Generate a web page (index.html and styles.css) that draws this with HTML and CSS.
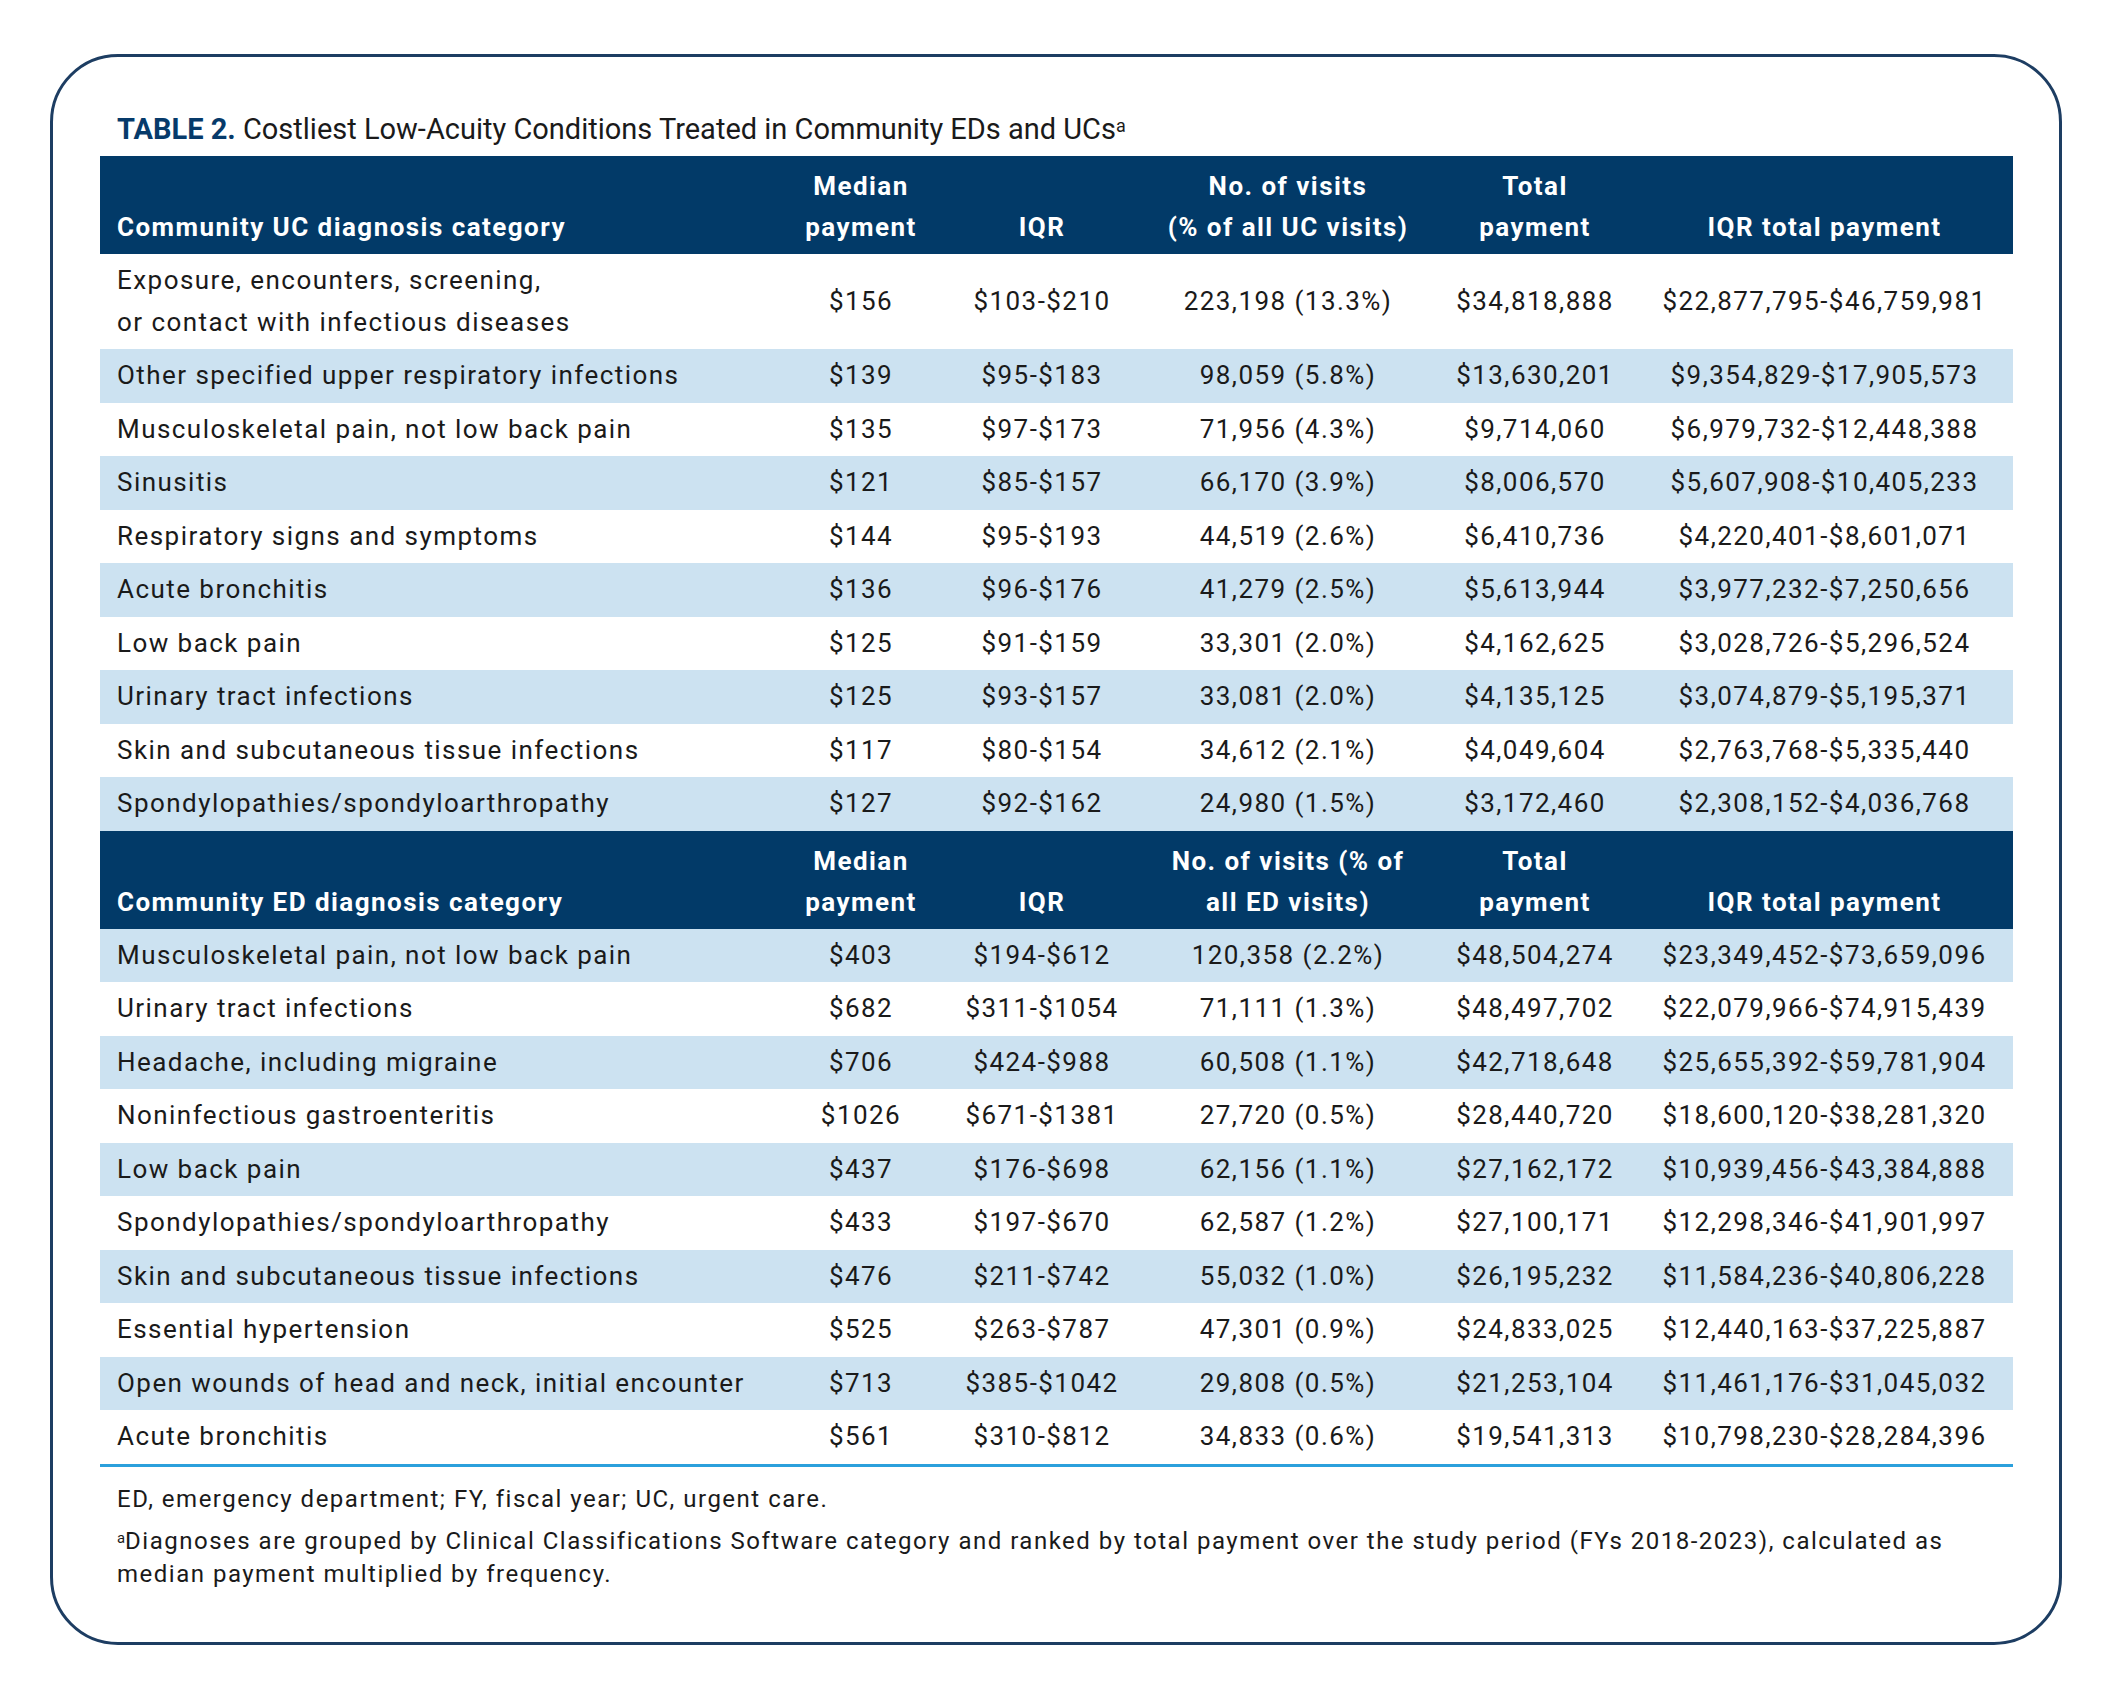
FILE: index.html
```html
<!DOCTYPE html>
<html lang="en">
<head>
<meta charset="utf-8">
<title>Table 2</title>
<link rel="stylesheet" href="styles.css">
</head>
<body>
<div class="frame">
  <div class="caption"><span class="label">TABLE 2.</span> Costliest Low-Acuity Conditions Treated in Community EDs and UCs<sup class="sup">a</sup></div>
  <table class="data">
    <colgroup>
      <col class="c1"><col class="c2"><col class="c3"><col class="c4"><col class="c5"><col class="c6">
    </colgroup>
    <tbody class="uc">
      <tr class="head">
        <th class="first">Community UC diagnosis category</th>
        <th>Median<br>payment</th>
        <th>IQR</th>
        <th>No. of visits<br>(% of all UC visits)</th>
        <th>Total<br>payment</th>
        <th>IQR total payment</th>
      </tr>
      <tr><td class="first">Exposure, encounters, screening,<br>or contact with infectious diseases</td><td>$156</td><td>$103-$210</td><td>223,198 (13.3%)</td><td>$34,818,888</td><td>$22,877,795-$46,759,981</td></tr>
      <tr class="band"><td class="first">Other specified upper respiratory infections</td><td>$139</td><td>$95-$183</td><td>98,059 (5.8%)</td><td>$13,630,201</td><td>$9,354,829-$17,905,573</td></tr>
      <tr><td class="first">Musculoskeletal pain, not low back pain</td><td>$135</td><td>$97-$173</td><td>71,956 (4.3%)</td><td>$9,714,060</td><td>$6,979,732-$12,448,388</td></tr>
      <tr class="band"><td class="first">Sinusitis</td><td>$121</td><td>$85-$157</td><td>66,170 (3.9%)</td><td>$8,006,570</td><td>$5,607,908-$10,405,233</td></tr>
      <tr><td class="first">Respiratory signs and symptoms</td><td>$144</td><td>$95-$193</td><td>44,519 (2.6%)</td><td>$6,410,736</td><td>$4,220,401-$8,601,071</td></tr>
      <tr class="band"><td class="first">Acute bronchitis</td><td>$136</td><td>$96-$176</td><td>41,279 (2.5%)</td><td>$5,613,944</td><td>$3,977,232-$7,250,656</td></tr>
      <tr><td class="first">Low back pain</td><td>$125</td><td>$91-$159</td><td>33,301 (2.0%)</td><td>$4,162,625</td><td>$3,028,726-$5,296,524</td></tr>
      <tr class="band"><td class="first">Urinary tract infections</td><td>$125</td><td>$93-$157</td><td>33,081 (2.0%)</td><td>$4,135,125</td><td>$3,074,879-$5,195,371</td></tr>
      <tr><td class="first">Skin and subcutaneous tissue infections</td><td>$117</td><td>$80-$154</td><td>34,612 (2.1%)</td><td>$4,049,604</td><td>$2,763,768-$5,335,440</td></tr>
      <tr class="band"><td class="first">Spondylopathies/spondyloarthropathy</td><td>$127</td><td>$92-$162</td><td>24,980 (1.5%)</td><td>$3,172,460</td><td>$2,308,152-$4,036,768</td></tr>
    </tbody>
    <tbody class="ed">
      <tr class="head">
        <th class="first">Community ED diagnosis category</th>
        <th>Median<br>payment</th>
        <th>IQR</th>
        <th>No. of visits (% of<br>all ED visits)</th>
        <th>Total<br>payment</th>
        <th>IQR total payment</th>
      </tr>
      <tr class="band"><td class="first">Musculoskeletal pain, not low back pain</td><td>$403</td><td>$194-$612</td><td>120,358 (2.2%)</td><td>$48,504,274</td><td>$23,349,452-$73,659,096</td></tr>
      <tr><td class="first">Urinary tract infections</td><td>$682</td><td>$311-$1054</td><td>71,111 (1.3%)</td><td>$48,497,702</td><td>$22,079,966-$74,915,439</td></tr>
      <tr class="band"><td class="first">Headache, including migraine</td><td>$706</td><td>$424-$988</td><td>60,508 (1.1%)</td><td>$42,718,648</td><td>$25,655,392-$59,781,904</td></tr>
      <tr><td class="first">Noninfectious gastroenteritis</td><td>$1026</td><td>$671-$1381</td><td>27,720 (0.5%)</td><td>$28,440,720</td><td>$18,600,120-$38,281,320</td></tr>
      <tr class="band"><td class="first">Low back pain</td><td>$437</td><td>$176-$698</td><td>62,156 (1.1%)</td><td>$27,162,172</td><td>$10,939,456-$43,384,888</td></tr>
      <tr><td class="first">Spondylopathies/spondyloarthropathy</td><td>$433</td><td>$197-$670</td><td>62,587 (1.2%)</td><td>$27,100,171</td><td>$12,298,346-$41,901,997</td></tr>
      <tr class="band"><td class="first">Skin and subcutaneous tissue infections</td><td>$476</td><td>$211-$742</td><td>55,032 (1.0%)</td><td>$26,195,232</td><td>$11,584,236-$40,806,228</td></tr>
      <tr><td class="first">Essential hypertension</td><td>$525</td><td>$263-$787</td><td>47,301 (0.9%)</td><td>$24,833,025</td><td>$12,440,163-$37,225,887</td></tr>
      <tr class="band"><td class="first">Open wounds of head and neck, initial encounter</td><td>$713</td><td>$385-$1042</td><td>29,808 (0.5%)</td><td>$21,253,104</td><td>$11,461,176-$31,045,032</td></tr>
      <tr class="last"><td class="first">Acute bronchitis</td><td>$561</td><td>$310-$812</td><td>34,833 (0.6%)</td><td>$19,541,313</td><td>$10,798,230-$28,284,396</td></tr>
    </tbody>
  </table>
  <div class="notes">
    <p class="note">ED, emergency department; FY, fiscal year; UC, urgent care.</p>
    <p class="note"><sup class="sup">a</sup>Diagnoses are grouped by Clinical Classifications Software category and ranked by total payment over the study period (FYs 2018-2023), calculated as<br>median payment multiplied by frequency.</p>
  </div>
</div>
</body>
</html>
```

FILE: styles.css
```css
html, body {
  margin: 0;
  padding: 0;
  background: #ffffff;
}

body {
  font-family: Roboto, "Liberation Sans", sans-serif;
  color: #1a1a1a;
}

.frame {
  box-sizing: border-box;
  margin: 54px 51px 0 50px;
  height: 1591px;
  border: 3px solid #1d3d62;
  border-radius: 68px;
  padding: 54px 46px 0 47px;
}

.caption {
  font-size: 29px;
  line-height: 36px;
  height: 36px;
  margin-bottom: 9px;
  padding-left: 17px;
  color: #1a1a1a;
}

.label {
  font-weight: 700;
  color: #063a6a;
}

.sup {
  font-size: 0.62em;
  vertical-align: top;
  position: relative;
  top: -0.15em;
  letter-spacing: 0;
}

.data {
  width: 100%;
  table-layout: fixed;
  border-collapse: collapse;
  font-size: 26px;
  letter-spacing: 1.45px;
}

.c1 { width: 680px; }
.c2 { width: 162px; }
.c3 { width: 200px; }
.c4 { width: 292px; }
.c5 { width: 202px; }
.c6 { width: 377px; }

.data th {
  background: #023a68;
  color: #ffffff;
  font-weight: 700;
  line-height: 41px;
  padding: 10px 0 6px;
  vertical-align: bottom;
  text-align: center;
  white-space: nowrap;
}

.data td {
  line-height: 41.5px;
  padding: 6px 0;
  text-align: center;
  vertical-align: middle;
  white-space: nowrap;
}

.data .first {
  text-align: left;
  padding-left: 17px;
}

.band td {
  background: #cce2f1;
}

.last td {
  border-bottom: 3px solid #2ba0dc;
}

.notes {
  padding: 0 17px;
  margin-top: 16px;
}

.note {
  margin: 0 0 9px;
  font-size: 24px;
  line-height: 33px;
  letter-spacing: 1.5px;
}
```
